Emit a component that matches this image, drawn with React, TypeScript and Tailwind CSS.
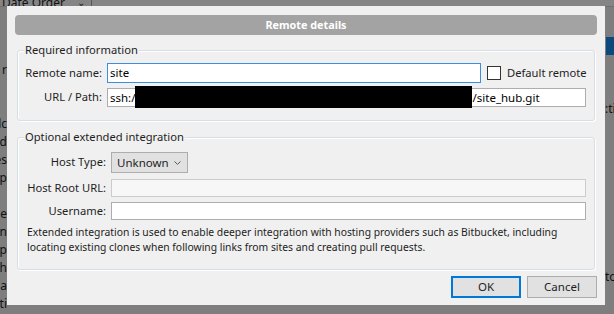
import React from 'react'

const font = { fontFamily: '"Noto Sans", "Liberation Sans", sans-serif' }

const leftBits = ['', '', '', 'r', '', '', 'lc', 'd', 'es', 'p', '', 'e', 'n', 'lp', 'h', 'a', 'ti', 'a']

const Label = ({ children, w }: { children: React.ReactNode; w: string }) => (
    <div className={`${w} shrink-0 text-right text-[11.2px] text-[#1e1e1e] pr-[5px] whitespace-nowrap`}>{children}</div>
)

const GroupBox = ({ title, children, className }: { title: string; children: React.ReactNode; className?: string }) => (
    <div className={`flex flex-col border border-[#d5dfe5] rounded-[3px] shadow-[inset_1px_1px_0_#ffffff,1px_1px_0_#ffffff] ${className}`}>
        <span className='self-start -mt-[8px] ml-[6px] px-[1px] bg-[#f0f0f0] text-[11.2px] leading-[14px] text-[#1e1e1e]'>{title}</span>
        {children}
    </div>
)

const App = () => {
    return (
        <div style={font} className='relative w-[614px] h-[314px] overflow-hidden bg-[#7e7e7e]'>
            {/* dimmed app behind the modal */}
            <div className='h-[7px] bg-[#858585] border-b border-[#6f6f6f] flex items-end overflow-hidden'>
                <span className='text-[12px] leading-[12px] text-[#111] ml-[2px] mb-[-3px]'>Date Order</span>
                <span className='text-[10px] leading-[10px] text-[#222] ml-[12px] mb-[-1px]'>⌄</span>
                <div className='ml-[6px] w-px h-full bg-[#555]'></div>
            </div>
            <div className='flex flex-col w-[7px] overflow-hidden'>
                {leftBits.map((b, i) => (
                    <div key={i} className='h-[18px] text-[12px] leading-[18px] text-[#111] flex justify-end whitespace-nowrap'>{b}</div>
                ))}
            </div>

            {/* right strip */}
            <div className='absolute left-[606px] top-[37px] w-[8px] h-[18px] bg-[#0c4a7e]'></div>
            <div className='absolute left-[605px] top-[100px] text-[12px] text-[#111]'>:ti</div>
            <div className='absolute left-[605px] top-[268px] text-[12px] text-[#111]'>to</div>

            {/* dialog */}
            <div className='absolute left-[7px] top-[6px] w-[598px] h-[299px] bg-[#f0f0f0] flex flex-col px-[10px] pt-[9px]'>
                <div className='mx-[-2px] h-[20px] rounded-[4px] bg-[#a3a3a3] flex items-center justify-center text-white font-bold text-[10.8px]'>
                    Remote details
                </div>

                <GroupBox title='Required information' className='mt-[15px] h-[71px]'>
                    <div className='flex items-center mt-[6px]'>
                        <Label w='w-[89px]'>Remote name:</Label>
                        <div className='w-[374px] h-[20px] border border-[#3d8ee0] bg-white text-[11.5px] leading-[18px] px-[2px] text-black'>site</div>
                        <div className='ml-[6px] w-[14px] h-[14px] border border-[#333] bg-white'></div>
                        <span className='ml-[6px] text-[11.2px] text-[#1e1e1e] whitespace-nowrap'>Default remote</span>
                    </div>
                    <div className='flex items-center mt-[5px]'>
                        <Label w='w-[89px]'>URL / Path:</Label>
                        <div className='w-[479px] h-[19px] border border-[#abadb3] bg-white text-[11.5px] leading-[17px] px-[2px] text-black flex'>
                            <span>ssh:/</span>
                            <span className='w-[337px] h-[22px] -mt-[3px] bg-black shrink-0'></span>
                            <span>/site_hub.git</span>
                        </div>
                    </div>
                </GroupBox>

                <GroupBox title='Optional extended integration' className='mt-[16px] h-[133px]'>
                    <div className='flex items-center mt-[8px]'>
                        <Label w='w-[93px]'>Host Type:</Label>
                        <div className='w-[77px] h-[21px] border border-[#adadad] bg-[#e1e1e1] flex items-center pl-[5px] text-[11.5px] text-[#1e1e1e]'>
                            <span>Unknown</span>
                            <svg className='ml-auto mr-[6px]' width='7' height='4' viewBox='0 0 7 4'>
                                <path d='M0.5 0.5 L3.5 3.3 L6.5 0.5' fill='none' stroke='#555' strokeWidth='1' />
                            </svg>
                        </div>
                    </div>
                    <div className='flex items-center mt-[6px]'>
                        <Label w='w-[93px]'>Host Root URL:</Label>
                        <div className='w-[475px] h-[18px] border border-[#cccccc] bg-[#f7f7f7]'></div>
                    </div>
                    <div className='flex items-center mt-[5px]'>
                        <Label w='w-[93px]'>Username:</Label>
                        <div className='w-[475px] h-[18px] border border-[#abadb3] bg-white'></div>
                    </div>
                    <p className='mt-[5px] ml-[9px] mr-[6px] text-[10.35px] leading-[15px] text-[#1e1e1e]'>
                        Extended integration is used to enable deeper integration with hosting providers such as Bitbucket, including locating existing clones when following links from sites and creating pull requests.
                    </p>
                </GroupBox>

                <div className='flex justify-end gap-[6px] mt-[6px] -mr-[2px]'>
                    <button className='w-[70px] h-[22px] border border-[#0078d7] shadow-[inset_0_0_0_1px_#0078d7] bg-[#e1e1e1] text-[11.5px] text-[#1e1e1e]'>OK</button>
                    <button className='w-[70px] h-[22px] border border-[#adadad] bg-[#e1e1e1] text-[11.5px] text-[#1e1e1e]'>Cancel</button>
                </div>
            </div>
        </div>
    )
}

export default App
